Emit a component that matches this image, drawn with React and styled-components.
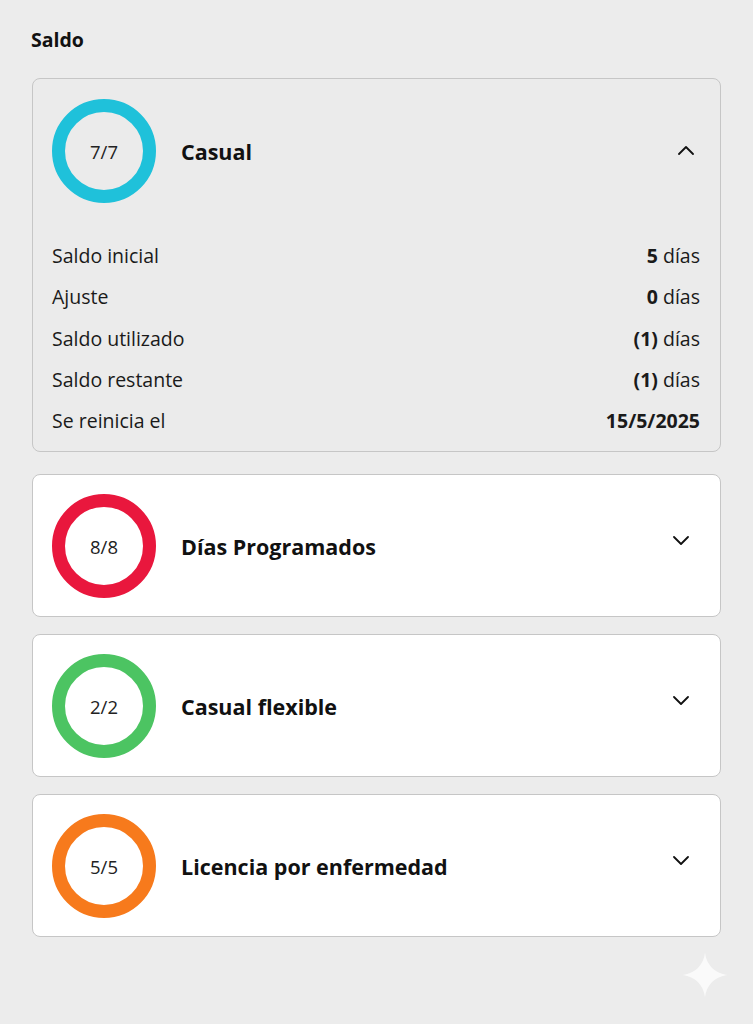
import React, { useState } from 'react';
import styled, { createGlobalStyle } from 'styled-components';

// Estilos globales
const GlobalStyle = createGlobalStyle`
  body {
    margin: 0;
    padding: 0;
    background: #ececec;
    color: #111;
    font-family: "Open Sans", "Liberation Sans", sans-serif;
  }
`;

const balances = [
  {
    id: 'casual',
    name: 'Casual',
    count: '7/7',
    color: '#1fc1da',
    details: [
      { label: 'Saldo inicial', strong: '5', unit: ' días' },
      { label: 'Ajuste', strong: '0', unit: ' días' },
      { label: 'Saldo utilizado', strong: '(1)', unit: ' días' },
      { label: 'Saldo restante', strong: '(1)', unit: ' días' },
      { label: 'Se reinicia el', strong: '15/5/2025', unit: '' },
    ],
  },
  { id: 'prog', name: 'Días Programados', count: '8/8', color: '#e9173d', details: [] },
  { id: 'flex', name: 'Casual flexible', count: '2/2', color: '#4cc462', details: [] },
  { id: 'sick', name: 'Licencia por enfermedad', count: '5/5', color: '#f77a1c', details: [] },
];

const Chevron = ({ up }) => (
  <svg width="16" height="10" viewBox="0 0 16 10" fill="none">
    <polyline
      points={up ? '1,9 8,2 15,9' : '1,1 8,8 15,1'}
      stroke="#111"
      strokeWidth="1.8"
      strokeLinecap="round"
      strokeLinejoin="round"
    />
  </svg>
);

const BalanceCard = ({ item, open, onToggle }) => (
  <Card $open={open}>
    <Header onClick={onToggle}>
      <Ring $color={item.color}>{item.count}</Ring>
      <Title>{item.name}</Title>
      <Toggle $open={open}>
        <Chevron up={open} />
      </Toggle>
    </Header>
    {open && item.details.length > 0 && (
      <Details>
        {item.details.map((d) => (
          <Row key={d.label}>
            <span>{d.label}</span>
            <Value>
              <b>{d.strong}</b>
              {d.unit}
            </Value>
          </Row>
        ))}
      </Details>
    )}
  </Card>
);

const App = () => {
  const [openId, setOpenId] = useState('casual');

  return (
    <>
      <GlobalStyle />
      <Page>
        <Heading>Saldo</Heading>
        <List>
          {balances.map((item) => (
            <BalanceCard
              key={item.id}
              item={item}
              open={openId === item.id}
              onToggle={() => setOpenId(openId === item.id ? null : item.id)}
            />
          ))}
        </List>
        <Sparkle width="44" height="44" viewBox="0 0 24 24">
          <path d="M12 0 C12.8 6.5 17.5 11.2 24 12 C17.5 12.8 12.8 17.5 12 24 C11.2 17.5 6.5 12.8 0 12 C6.5 11.2 11.2 6.5 12 0 Z" fill="#fafafa" />
        </Sparkle>
      </Page>
    </>
  );
};

const Page = styled.div`
  min-height: 1024px;
  box-sizing: border-box;
  padding: 29px 32px 40px 32px;
  position: relative;
`;

const Heading = styled.h2`
  margin: 0 0 27px -1px;
  font-size: 19.5px;
  line-height: 22px;
  font-weight: 700;
`;

const List = styled.div`
  display: flex;
  flex-direction: column;
  gap: 17px;
`;

const Card = styled.div`
  background: ${({ $open }) => ($open ? '#ebebeb' : '#fff')};
  border: 1px solid #c6c6c6;
  border-radius: 8px;
  padding: ${({ $open }) => ($open ? '20px 20px 10px 19px' : '19px 20px 18px 19px')};
  margin-bottom: ${({ $open }) => ($open ? '5px' : '0')};
`;

const Header = styled.div`
  display: flex;
  align-items: center;
  cursor: pointer;
`;

const Ring = styled.div`
  width: 104px;
  height: 104px;
  box-sizing: border-box;
  border-radius: 50%;
  border: 13px solid ${({ $color }) => $color};
  display: flex;
  align-items: center;
  justify-content: center;
  font-size: 18.5px;
  color: #222;
  flex-shrink: 0;
`;

const Title = styled.div`
  margin-left: 25px;
  font-size: 21.5px;
  font-weight: 700;
  flex: 1;
`;

const Toggle = styled.div`
  display: flex;
  margin-right: ${({ $open }) => ($open ? '6px' : '11px')};
  margin-top: ${({ $open }) => ($open ? '-2px' : '-10px')};
`;

const Details = styled.div`
  margin-top: 32px;
  display: flex;
  flex-direction: column;
`;

const Row = styled.div`
  display: flex;
  justify-content: space-between;
  align-items: center;
  height: 41.3px;
  font-size: 19.5px;
  color: #1a1a1a;
`;

const Value = styled.span`
  b {
    font-weight: 700;
  }
`;

const Sparkle = styled.svg`
  position: absolute;
  right: 26px;
  bottom: 27px;
`;

export default App;
